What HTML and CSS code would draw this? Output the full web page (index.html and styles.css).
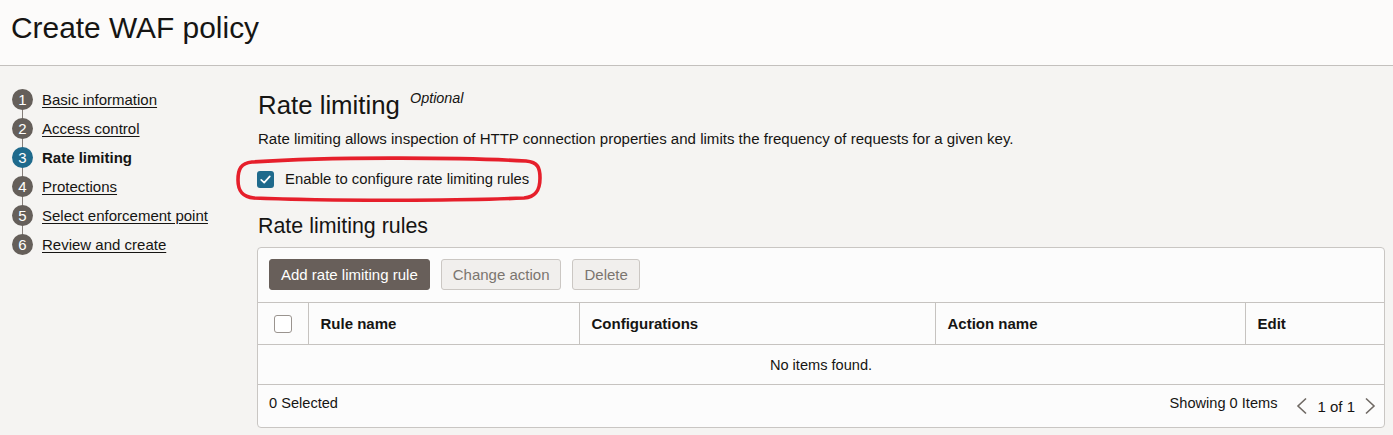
FILE: index.html
```html
<!DOCTYPE html>
<html lang="en">
<head>
<meta charset="utf-8">
<title>Create WAF policy</title>
<link rel="stylesheet" href="styles.css">
</head>
<body>
<header class="page-header">
  <h1 class="title">Create WAF policy</h1>
</header>
<div class="layout">
  <nav class="steps">
    <ol class="step-list">
      <li class="step"><span class="num">1</span><a class="step-link" href="#">Basic information</a></li>
      <li class="step"><span class="num">2</span><a class="step-link" href="#">Access control</a></li>
      <li class="step active"><span class="num">3</span><span class="step-current">Rate limiting</span></li>
      <li class="step"><span class="num">4</span><a class="step-link" href="#">Protections</a></li>
      <li class="step"><span class="num">5</span><a class="step-link" href="#">Select enforcement point</a></li>
      <li class="step"><span class="num">6</span><a class="step-link" href="#">Review and create</a></li>
    </ol>
  </nav>
  <main class="content">
    <div class="section-head">
      <h2 class="section-title">Rate limiting</h2>
      <span class="optional">Optional</span>
    </div>
    <p class="desc">Rate limiting allows inspection of HTTP connection properties and limits the frequency of requests for a given key.</p>
    <div class="check-row">
      <span class="checkbox checked">
        <svg width="13" height="13" viewBox="0 0 13 13"><polyline points="2.2,6.8 5.2,9.6 10.8,3.4" fill="none" stroke="#fff" stroke-width="1.7" stroke-linecap="round" stroke-linejoin="round"/></svg>
      </span>
      <span class="check-label">Enable to configure rate limiting rules</span>
      <svg class="annotation" width="306" height="46" viewBox="0 0 306 46"><path d="M16,6 C90,1 220,1 290,5 C302,6 304,12 304,22 C304,34 300,41 288,42 C220,45 90,45 18,42 C6,41 2,35 2,24 C2,13 5,7 16,6 Z" fill="none" stroke="#e61f2b" stroke-width="3.6"/></svg>
    </div>
    <h3 class="sub-title">Rate limiting rules</h3>
    <div class="card">
      <div class="toolbar">
        <button class="btn btn-primary">Add rate limiting rule</button>
        <button class="btn btn-disabled">Change action</button>
        <button class="btn btn-disabled">Delete</button>
      </div>
      <table class="grid">
        <colgroup>
          <col style="width:50px">
          <col style="width:271px">
          <col style="width:356px">
          <col style="width:310px">
          <col>
        </colgroup>
        <thead>
          <tr>
            <th class="col-check"><span class="checkbox empty"></span></th>
            <th>Rule name</th>
            <th>Configurations</th>
            <th>Action name</th>
            <th>Edit</th>
          </tr>
        </thead>
        <tbody>
          <tr><td class="empty-row" colspan="5">No items found.</td></tr>
        </tbody>
      </table>
      <div class="footer">
        <span class="selected">0 Selected</span>
        <div class="pager">
          <span class="showing">Showing 0 Items</span>
          <svg class="chev" width="14" height="18" viewBox="0 0 14 18"><polyline points="11,1.5 3,9 11,16.5" fill="none" stroke="#6f6964" stroke-width="1.6"/></svg>
          <span class="pages">1 of 1</span>
          <svg class="chev" width="14" height="18" viewBox="0 0 14 18"><polyline points="3,1.5 11,9 3,16.5" fill="none" stroke="#6f6964" stroke-width="1.6"/></svg>
        </div>
      </div>
    </div>
  </main>
</div>
</body>
</html>
```

FILE: styles.css
```css
* { box-sizing: border-box; }
html, body {
  margin: 0;
  padding: 0;
}
body {
  background: #f5f4f2;
  color: #161513;
  font-family: "Liberation Sans", Arial, sans-serif;
  font-size: 15px;
  height: 435px;
  overflow: hidden;
}
.page-header {
  background: #fcfbfa;
  height: 66px;
  border-bottom: 1px solid #c3c0bd;
  padding: 0 11px;
  display: flex;
  align-items: center;
}
.title {
  margin: 0;
  font-size: 29.9px;
  font-weight: normal;
  line-height: 36px;
  margin-top: -10px;
}
.layout {
  display: flex;
  padding-top: 19px;
}
.steps {
  width: 258px;
  flex: none;
  padding-left: 12px;
}
.step-list {
  list-style: none;
  margin: 0;
  padding: 0;
}
.step {
  position: relative;
  height: 29px;
  display: flex;
  align-items: center;
}
.step + .step::before {
  content: "";
  position: absolute;
  left: 10px;
  top: -5px;
  width: 1px;
  height: 10px;
  background: #857e79;
}
.num {
  width: 21px;
  height: 21px;
  border-radius: 50%;
  background: #655f5a;
  color: #fff;
  font-size: 15px;
  display: flex;
  align-items: center;
  justify-content: center;
  flex: none;
  position: relative;
  z-index: 1;
}
.step.active .num { background: #1f6a8c; }
.step-link {
  margin-left: 9px;
  color: #161513;
  text-decoration: underline;
  text-underline-offset: 2px;
}
.step-current {
  margin-left: 9px;
  font-weight: bold;
}
.content {
  flex: 1;
  padding-top: 5px;
  padding-right: 8px;
}
.section-head {
  display: flex;
  align-items: flex-start;
  height: 30px;
}
.section-title {
  margin: 0;
  font-size: 25.8px;
  font-weight: normal;
  line-height: 30px;
}
.optional {
  font-style: italic;
  font-size: 14.4px;
  margin-left: 10px;
  margin-top: -2px;
  line-height: 20px;
}
.desc {
  margin: 9px 0 0;
  font-size: 15.05px;
  line-height: 20px;
}
.check-row {
  position: relative;
  margin-top: 18px;
  height: 24px;
  display: flex;
  align-items: center;
}
.checkbox {
  width: 17px;
  height: 17px;
  border-radius: 3px;
  display: flex;
  align-items: center;
  justify-content: center;
  flex: none;
}
.checkbox.checked {
  background: #1f6a8c;
  margin-left: -1px;
}
.checkbox.empty {
  width: 18px;
  height: 18px;
  background: #fff;
  border: 1px solid #9a948f;
}
.check-label {
  margin-left: 11px;
  font-size: 14.85px;
}
.annotation {
  position: absolute;
  left: -22px;
  top: -11px;
  pointer-events: none;
}
.sub-title {
  margin: 22px 0 0;
  font-size: 21.4px;
  font-weight: normal;
  line-height: 26px;
}
.card {
  margin-top: 8px;
  margin-left: -1px;
  background: #fcfcfc;
  border: 1px solid #c9c6c3;
  border-radius: 4px;
}
.toolbar {
  display: flex;
  gap: 11px;
  padding: 11px 11px 12px;
}
.btn {
  font-family: inherit;
  font-size: 15px;
  height: 31px;
  padding: 0 11px;
  border-radius: 3px;
  line-height: 29px;
}
.btn-primary {
  background: #685f5a;
  color: #fff;
  border: 1px solid #685f5a;
}
.btn-disabled {
  background: #f1efed;
  color: #7b756f;
  border: 1px solid #cbc7c3;
}
.grid {
  width: 100%;
  border-collapse: collapse;
  table-layout: fixed;
}
.grid th {
  text-align: left;
  font-weight: bold;
  font-size: 15px;
  height: 42px;
  padding: 0 12px;
  border-top: 1px solid #c6c3c0;
  border-bottom: 1px solid #c6c3c0;
  border-left: 1px solid #c6c3c0;
}
.grid th:first-child { border-left: none; }
.grid th.col-check {
  padding: 0 0 0 16px;
}
.grid th.col-check .checkbox { margin-top: 1px; }
.empty-row {
  text-align: center;
  height: 40px;
  font-size: 14.6px;
  border-bottom: 1px solid #c6c3c0;
  padding: 0;
}
.footer {
  display: flex;
  justify-content: space-between;
  align-items: center;
  height: 42px;
  padding: 0 7px 0 11px;
}
.selected {
  font-size: 14.6px;
  margin-top: -6px;
}
.pager {
  display: flex;
  align-items: center;
}
.showing {
  font-size: 14.6px;
  margin-top: -6px;
  margin-right: 18px;
}
.chev { display: block; }
.pages {
  font-size: 15px;
  margin: 0 8px;
}
```
